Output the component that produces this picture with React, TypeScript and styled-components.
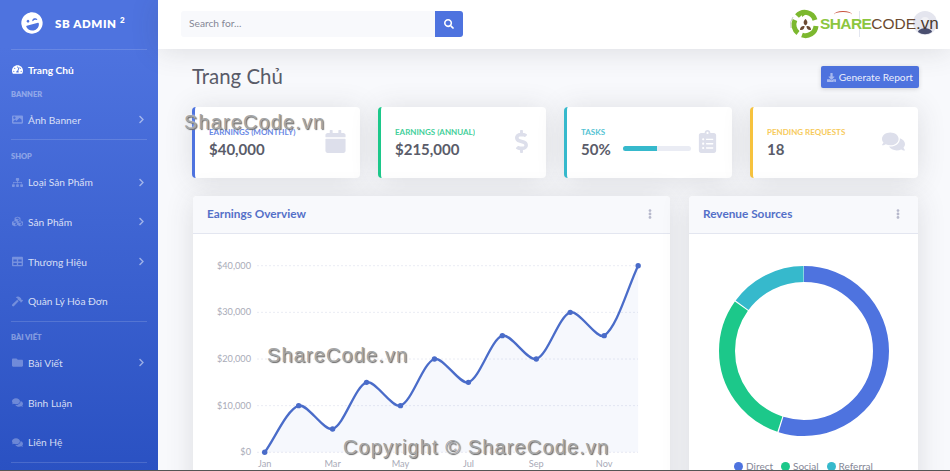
import styled, { createGlobalStyle } from 'styled-components';
import type { IconType } from 'react-icons';
import {
  FaLaughWink,
  FaTachometerAlt,
  FaImage,
  FaSitemap,
  FaCubes,
  FaTable,
  FaHammer,
  FaFolder,
  FaComments,
  FaChevronRight,
  FaSearch,
  FaDownload,
  FaCalendar,
  FaDollarSign,
  FaClipboardList,
  FaEllipsisV,
} from 'react-icons/fa';

const fontStack = `'Lato', 'Noto Sans', 'Open Sans', sans-serif`;

const GlobalStyle = createGlobalStyle`
  html, body {
    margin: 0;
    height: 471px;
    overflow: hidden;
    font-family: ${fontStack};
    background: #f8f9fc;
  }
  * { box-sizing: border-box; }
`;

type NavEntry = { label: string; icon: IconType; arrow?: boolean };

const SHOP_ITEMS: NavEntry[] = [
  { label: 'Loại Sản Phẩm', icon: FaSitemap, arrow: true },
  { label: 'Sản Phẩm', icon: FaCubes, arrow: true },
  { label: 'Thương Hiệu', icon: FaTable, arrow: true },
  { label: 'Quản Lý Hóa Đơn', icon: FaHammer },
];

const POST_ITEMS: NavEntry[] = [
  { label: 'Bài Viết', icon: FaFolder, arrow: true },
  { label: 'Bình Luận', icon: FaComments },
  { label: 'Liên Hệ', icon: FaComments },
];

const earnings = [0, 10000, 5000, 15000, 10000, 20000, 15000, 25000, 20000, 30000, 25000, 40000];

const X0 = 264.7;
const STEP = 33.95;
const Y0 = 452.3;
const Y_SCALE = (452.3 - 265.7) / 40000;

const points = earnings.map((v, i) => ({ x: X0 + i * STEP, y: Y0 - v * Y_SCALE }));

// same spline chart.js draws with lineTension .3
const linePath = () => {
  const t = 0.3;
  const ctrl = points.map((p, i) => {
    const a = points[i - 1] ?? p;
    const b = points[i + 1] ?? p;
    const d01 = Math.hypot(p.x - a.x, p.y - a.y);
    const d12 = Math.hypot(b.x - p.x, b.y - p.y);
    const sum = d01 + d12 || 1;
    const fa = (t * d01) / sum;
    const fb = (t * d12) / sum;
    return {
      px: p.x - fa * (b.x - a.x),
      py: p.y - fa * (b.y - a.y),
      nx: p.x + fb * (b.x - a.x),
      ny: p.y + fb * (b.y - a.y),
    };
  });
  let d = `M${points[0].x} ${points[0].y}`;
  for (let i = 1; i < points.length; i++) {
    d += ` C${ctrl[i - 1].nx} ${ctrl[i - 1].ny} ${ctrl[i].px} ${ctrl[i].py} ${points[i].x} ${points[i].y}`;
  }
  return d;
};

const ticks = [40000, 30000, 20000, 10000, 0];
const months = ['Jan', 'Mar', 'May', 'Jul', 'Sep', 'Nov'];

const DONUT_R = 77;
const DONUT_C = 2 * Math.PI * DONUT_R;
const donut = [
  { value: 55, color: '#4e73df', offset: 0 },
  { value: 30, color: '#1cc88a', offset: 55 },
  { value: 15, color: '#36b9cc', offset: 85 },
];

const App = () => {
  const line = linePath();
  return (
    <Page>
      <GlobalStyle />
      <Sidebar>
        <Brand>
          <FaLaughWink />
          <BrandText>
            SB ADMIN <sup>2</sup>
          </BrandText>
        </Brand>
        <Divider />
        <NavItem $active>
          <FaTachometerAlt />
          <span>Trang Chủ</span>
        </NavItem>
        <NavHeading $top={-1}>Banner</NavHeading>
        <NavItem>
          <FaImage />
          <span>Ảnh Banner</span>
          <FaChevronRight />
        </NavItem>
        <Divider />
        <NavHeading $top={11}>Shop</NavHeading>
        {SHOP_ITEMS.map(({ label, icon: Icon, arrow }) => (
          <NavItem key={label}>
            <Icon />
            <span>{label}</span>
            {arrow && <FaChevronRight />}
          </NavItem>
        ))}
        <Divider />
        <NavHeading $top={10}>Bài Viết</NavHeading>
        {POST_ITEMS.map(({ label, icon: Icon, arrow }) => (
          <NavItem key={label}>
            <Icon />
            <span>{label}</span>
            {arrow && <FaChevronRight />}
          </NavItem>
        ))}
        <Divider />
      </Sidebar>

      <Main>
        <Topbar>
          <SearchBox>
            <SearchInput placeholder="Search for..." />
            <SearchButton>
              <FaSearch />
            </SearchButton>
          </SearchBox>
          <Avatar width="24" height="24" viewBox="0 0 24 24">
            <circle cx="12" cy="12" r="12" fill="#e4e5ee" />
            <circle cx="12" cy="10" r="4" fill="#f1f1f5" />
            <path d="M5 21 C6 16 18 16 19 21 A12 12 0 0 1 5 21 Z" fill="#4a4f70" />
          </Avatar>
          <TopDivider />
          <SiteLogo>
            <svg width="34" height="30" viewBox="0 0 34 30">
              <path d="M5 8 A 12 12 0 0 0 3 19" fill="none" stroke="#ccc" strokeWidth="1" />
              <path d="M9 7 A 10.5 10.5 0 0 1 27 11" fill="none" stroke="#7cb82f" strokeWidth="5" />
              <path d="M28 17 A 10.5 10.5 0 0 1 14 26" fill="none" stroke="#7cb82f" strokeWidth="5" />
              <path d="M10 24 A 10.5 10.5 0 0 1 7 11" fill="none" stroke="#7cb82f" strokeWidth="5" />
              <path d="M14 1 L19 4.5 L14 8 Z" fill="#7cb82f" />
              <path d="M17.5 10 C20 12 20 15 17.5 16.5 C15 15 15 12 17.5 10 Z" fill="#6b4a32" />
              <path d="M12 21 C12 18 14 16.5 16.5 17 C16.5 20 15 21.5 12 21 Z" fill="#6b4a32" />
              <path d="M23 21 C23 18 21 16.5 18.5 17 C18.5 20 20 21.5 23 21 Z" fill="#6b4a32" />
            </svg>
            <LogoText>
              <b>SHARE</b>
              <span>CODE</span>
              <i>.vn</i>
            </LogoText>
          </SiteLogo>
        </Topbar>

        <Content>
          <PageHead>
            <PageTitle>Trang Chủ</PageTitle>
            <ReportButton>
              <FaDownload />
              Generate Report
            </ReportButton>
          </PageHead>

          <StatsGrid>
            <StatCard $color="#4e73df">
              <StatBody>
                <StatLabel $color="#4e73df">Earnings (Monthly)</StatLabel>
                <StatValue>$40,000</StatValue>
              </StatBody>
              <FaCalendar />
            </StatCard>
            <StatCard $color="#1cc88a">
              <StatBody>
                <StatLabel $color="#1cc88a">Earnings (Annual)</StatLabel>
                <StatValue>$215,000</StatValue>
              </StatBody>
              <FaDollarSign />
            </StatCard>
            <StatCard $color="#36b9cc">
              <StatBody>
                <StatLabel $color="#36b9cc">Tasks</StatLabel>
                <TaskRow>
                  <StatValue>50%</StatValue>
                  <Progress>
                    <ProgressFill style={{ width: '50%' }} />
                  </Progress>
                </TaskRow>
              </StatBody>
              <FaClipboardList />
            </StatCard>
            <StatCard $color="#f6c23e">
              <StatBody>
                <StatLabel $color="#f6c23e">Pending Requests</StatLabel>
                <StatValue>18</StatValue>
              </StatBody>
              <FaComments />
            </StatCard>
          </StatsGrid>

          <ChartsGrid>
            <Panel>
              <PanelHead>
                <PanelTitle>Earnings Overview</PanelTitle>
                <FaEllipsisV />
              </PanelHead>
              <ChartSvg viewBox="193 234 477 240" width="477" height="240">
                {ticks.map((t) => {
                  const y = Y0 - t * Y_SCALE;
                  return (
                    <g key={t}>
                      <line x1="257" x2="638" y1={y} y2={y} stroke="#eaecf4" strokeDasharray="2 2" />
                      <text x="251" y={y + 3} textAnchor="end">
                        ${t.toLocaleString('en-US')}
                      </text>
                    </g>
                  );
                })}
                {months.map((m, i) => (
                  <text key={m} x={points[i * 2].x} y={467} textAnchor="middle">
                    {m}
                  </text>
                ))}
                <path
                  d={`${line} L${points[11].x} ${Y0} L${points[0].x} ${Y0} Z`}
                  fill="rgba(78,115,223,0.05)"
                />
                <path d={line} fill="none" stroke="#4a6cc9" strokeWidth="2.3" />
                {points.map((p) => (
                  <circle key={p.x} cx={p.x} cy={p.y} r="2.7" fill="#4a6cc9" />
                ))}
              </ChartSvg>
            </Panel>

            <Panel>
              <PanelHead>
                <PanelTitle>Revenue Sources</PanelTitle>
                <FaEllipsisV />
              </PanelHead>
              <DonutBox>
                <svg width="180" height="180" viewBox="0 0 180 180">
                  <g transform="rotate(-90 90 90)">
                    {donut.map((d) => (
                      <circle
                        key={d.color}
                        cx="90"
                        cy="90"
                        r={DONUT_R}
                        fill="none"
                        stroke={d.color}
                        strokeWidth="16"
                        strokeDasharray={`${(d.value / 100) * DONUT_C - 1.2} ${DONUT_C}`}
                        strokeDashoffset={-(d.offset / 100) * DONUT_C}
                      />
                    ))}
                  </g>
                </svg>
              </DonutBox>
              <Legend>
                <LegendItem $color="#4e73df">Direct</LegendItem>
                <LegendItem $color="#1cc88a">Social</LegendItem>
                <LegendItem $color="#36b9cc">Referral</LegendItem>
              </Legend>
            </Panel>
          </ChartsGrid>
        </Content>
      </Main>

      <Watermark $x={184} $y={109}>ShareCode.vn</Watermark>
      <Watermark $x={267} $y={342}>ShareCode.vn</Watermark>
      <Watermark $x={343} $y={434}>Copyright © ShareCode.vn</Watermark>
      <BottomEdge />
    </Page>
  );
};

export default App;

const Page = styled.div`
  position: relative;
  display: flex;
  width: 950px;
  height: 471px;
  overflow: hidden;
`;

const Sidebar = styled.nav`
  width: 158px;
  flex-shrink: 0;
  height: 471px;
  overflow: hidden;
  background: linear-gradient(180deg, #4e73df 10%, #2a51c2 100%);
`;

const Brand = styled.div`
  display: flex;
  align-items: center;
  height: 49px;
  padding: 0 0 3px 21px;
  color: #fff;

  > svg {
    width: 22px;
    height: 22px;
    transform: rotate(-15deg);
  }
`;

const BrandText = styled.div`
  margin-left: 12px;
  font-size: 11.5px;
  font-weight: 800;
  letter-spacing: 0.6px;
  white-space: nowrap;

  sup {
    font-size: 8px;
    line-height: 0;
  }
`;

const Divider = styled.hr`
  margin: 0 11px;
  border: 0;
  border-top: 1px solid rgba(255, 255, 255, 0.15);
`;

const NavItem = styled.a<{ $active?: boolean }>`
  display: flex;
  align-items: center;
  gap: 5px;
  height: 39.7px;
  padding: 0 12px;
  font-size: 10.2px;
  font-weight: ${({ $active }) => ($active ? 700 : 400)};
  color: ${({ $active }) => ($active ? '#fff' : 'rgba(255, 255, 255, 0.8)')};
  white-space: nowrap;

  > svg:first-child {
    height: 11px;
    width: auto;
    flex-shrink: 0;
    color: ${({ $active }) => ($active ? '#fff' : 'rgba(255, 255, 255, 0.3)')};
  }

  > svg:last-child:not(:first-child) {
    height: 9px;
    width: auto;
    margin-left: auto;
    color: rgba(255, 255, 255, 0.5);
  }
`;

const NavHeading = styled.div<{ $top?: number }>`
  margin-top: ${({ $top }) => $top ?? 0}px;
  padding-left: 11px;
  height: 11px;
  line-height: 11px;
  font-size: 7.5px;
  font-weight: 800;
  text-transform: uppercase;
  color: rgba(255, 255, 255, 0.4);
`;

const Main = styled.div`
  flex: 1;
  min-width: 0;
`;

const Topbar = styled.header`
  position: relative;
  z-index: 1;
  display: flex;
  align-items: center;
  height: 49px;
  padding: 0 0 1px 23px;
  background: #fff;
  box-shadow: 0 2px 28px rgba(58, 59, 69, 0.15);
`;

const SearchBox = styled.div`
  display: flex;
  width: 282px;
  height: 26px;
`;

const SearchInput = styled.input`
  flex: 1;
  min-width: 0;
  border: 0;
  outline: 0;
  padding: 0 8px 2px;
  border-radius: 3px 0 0 3px;
  background: #f8f9fc;
  font-family: ${fontStack};
  font-size: 10.2px;
  color: #6e707e;

  &::placeholder {
    color: #858796;
  }
`;

const SearchButton = styled.button`
  display: flex;
  align-items: center;
  justify-content: center;
  width: 28px;
  border: 0;
  padding: 0;
  border-radius: 0 3px 3px 0;
  background: #4e73df;
  color: #fff;
  font-size: 10px;
`;

const SiteLogo = styled.div`
  position: absolute;
  left: 630px;
  top: 9px;
  display: flex;
  align-items: center;
`;

const LogoText = styled.div`
  position: relative;
  margin-left: -2px;
  font-family: 'Liberation Sans', sans-serif;
  font-size: 15.5px;
  white-space: nowrap;

  &::before {
    content: '';
    position: absolute;
    left: 14px;
    top: -3px;
    width: 18px;
    height: 6px;
    border-top: 1px solid #c8503c;
    border-radius: 50%;
  }

  b {
    letter-spacing: -0.6px;
    color: #8cc63f;
  }
  span {
    color: #6b4a32;
  }
  i {
    font-style: normal;
    font-size: 17px;
    color: #4a3a30;
  }
`;

const Avatar = styled.svg`
  position: absolute;
  left: 755px;
  top: 11px;
`;

const TopDivider = styled.div`
  position: absolute;
  left: 701px;
  top: 11px;
  width: 1px;
  height: 26px;
  background: #e3e6f0;
`;

const Content = styled.main`
  padding: 17px 32px 0 34px;
`;

const PageHead = styled.div`
  display: flex;
  align-items: center;
  justify-content: space-between;
  height: 22px;
  margin-bottom: 19px;
  margin-right: -1px;
`;

const PageTitle = styled.h1`
  margin: -2px 0 0;
  font-size: 20.4px;
  font-weight: 400;
  color: #5a5c69;
`;

const ReportButton = styled.button`
  display: flex;
  align-items: center;
  gap: 3px;
  height: 22px;
  padding: 0 6px;
  border: 0;
  border-radius: 2px;
  background: #4e73df;
  color: rgba(255, 255, 255, 0.9);
  font-family: ${fontStack};
  font-size: 10.2px;
  box-shadow: 0 1px 4px rgba(58, 59, 69, 0.2);

  svg {
    height: 9px;
    width: 9px;
    color: rgba(255, 255, 255, 0.5);
  }
`;

const StatsGrid = styled.section`
  display: grid;
  grid-template-columns: repeat(4, minmax(0, 1fr));
  gap: 18px;
`;

const StatCard = styled.article<{ $color: string }>`
  display: flex;
  align-items: center;
  justify-content: space-between;
  height: 71px;
  padding: 0 13px 0 14px;
  background: #fff;
  border-left: 3px solid ${({ $color }) => $color};
  border-radius: 4px;
  box-shadow: 0 2px 28px rgba(58, 59, 69, 0.15);

  > svg {
    height: 23px;
    width: auto;
    margin-top: -3px;
    flex-shrink: 0;
    color: #dddfeb;
  }
`;

const StatBody = styled.div`
  flex: 1;
  min-width: 0;
`;

const StatLabel = styled.div<{ $color: string }>`
  margin-bottom: 1px;
  font-size: 8px;
  font-weight: 700;
  line-height: 11px;
  text-transform: uppercase;
  white-space: nowrap;
  color: ${({ $color }) => $color};
  opacity: 0.85;
`;

const StatValue = styled.div`
  font-size: 15px;
  font-weight: 700;
  line-height: 20px;
  color: #5a5c69;
`;

const TaskRow = styled.div`
  display: flex;
  align-items: center;
  gap: 12px;
`;

const Progress = styled.div`
  width: 68px;
  height: 5px;
  border-radius: 3px;
  background: #eaecf4;
  overflow: hidden;
`;

const ProgressFill = styled.div`
  height: 100%;
  background: #36b9cc;
`;

const ChartsGrid = styled.section`
  display: grid;
  grid-template-columns: 477px 229px;
  gap: 19px;
  margin: 18px 0 0 1px;
`;

const Panel = styled.article`
  background: #fff;
  border-radius: 4px;
  box-shadow: 0 2px 28px rgba(58, 59, 69, 0.15);
  height: 320px;
`;

const PanelHead = styled.div`
  display: flex;
  align-items: center;
  justify-content: space-between;
  height: 38px;
  padding: 0 15px 2px 14px;
  background: #f8f9fc;
  border-bottom: 1px solid #e3e6f0;
  border-radius: 4px 4px 0 0;

  > svg {
    height: 10px;
    width: auto;
    color: #b7b9cc;
  }
`;

const PanelTitle = styled.h2`
  margin: 0;
  font-size: 11.8px;
  font-weight: 700;
  color: #5470c8;
`;

const ChartSvg = styled.svg`
  display: block;

  text {
    font-family: ${fontStack};
    font-size: 9.2px;
    fill: #a9abb8;
  }
`;

const DonutBox = styled.div`
  display: flex;
  justify-content: center;
  padding-top: 27px;

  svg {
    display: block;
  }
`;

const Legend = styled.div`
  display: flex;
  justify-content: center;
  gap: 8px;
  margin-top: 19px;
  font-size: 10px;
  line-height: 12px;
  color: #858796;
`;

const LegendItem = styled.span<{ $color: string }>`
  display: flex;
  align-items: center;
  gap: 3px;

  &::before {
    content: '';
    width: 9px;
    height: 9px;
    border-radius: 50%;
    background: ${({ $color }) => $color};
  }
`;

const Watermark = styled.div<{ $x: number; $y: number }>`
  position: absolute;
  left: ${({ $x }) => $x}px;
  top: ${({ $y }) => $y}px;
  z-index: 5;
  font-family: 'Liberation Sans', sans-serif;
  font-size: 20px;
  line-height: 26px;
  letter-spacing: 1.12px;
  white-space: nowrap;
  color: #a6a6a6;
  text-shadow: 1px 1px 1px #666, 0 0 2px #fff;
`;

const BottomEdge = styled.div`
  position: absolute;
  left: 0;
  right: 0;
  bottom: 0;
  z-index: 6;
  height: 1px;
  background: #555;
`;
